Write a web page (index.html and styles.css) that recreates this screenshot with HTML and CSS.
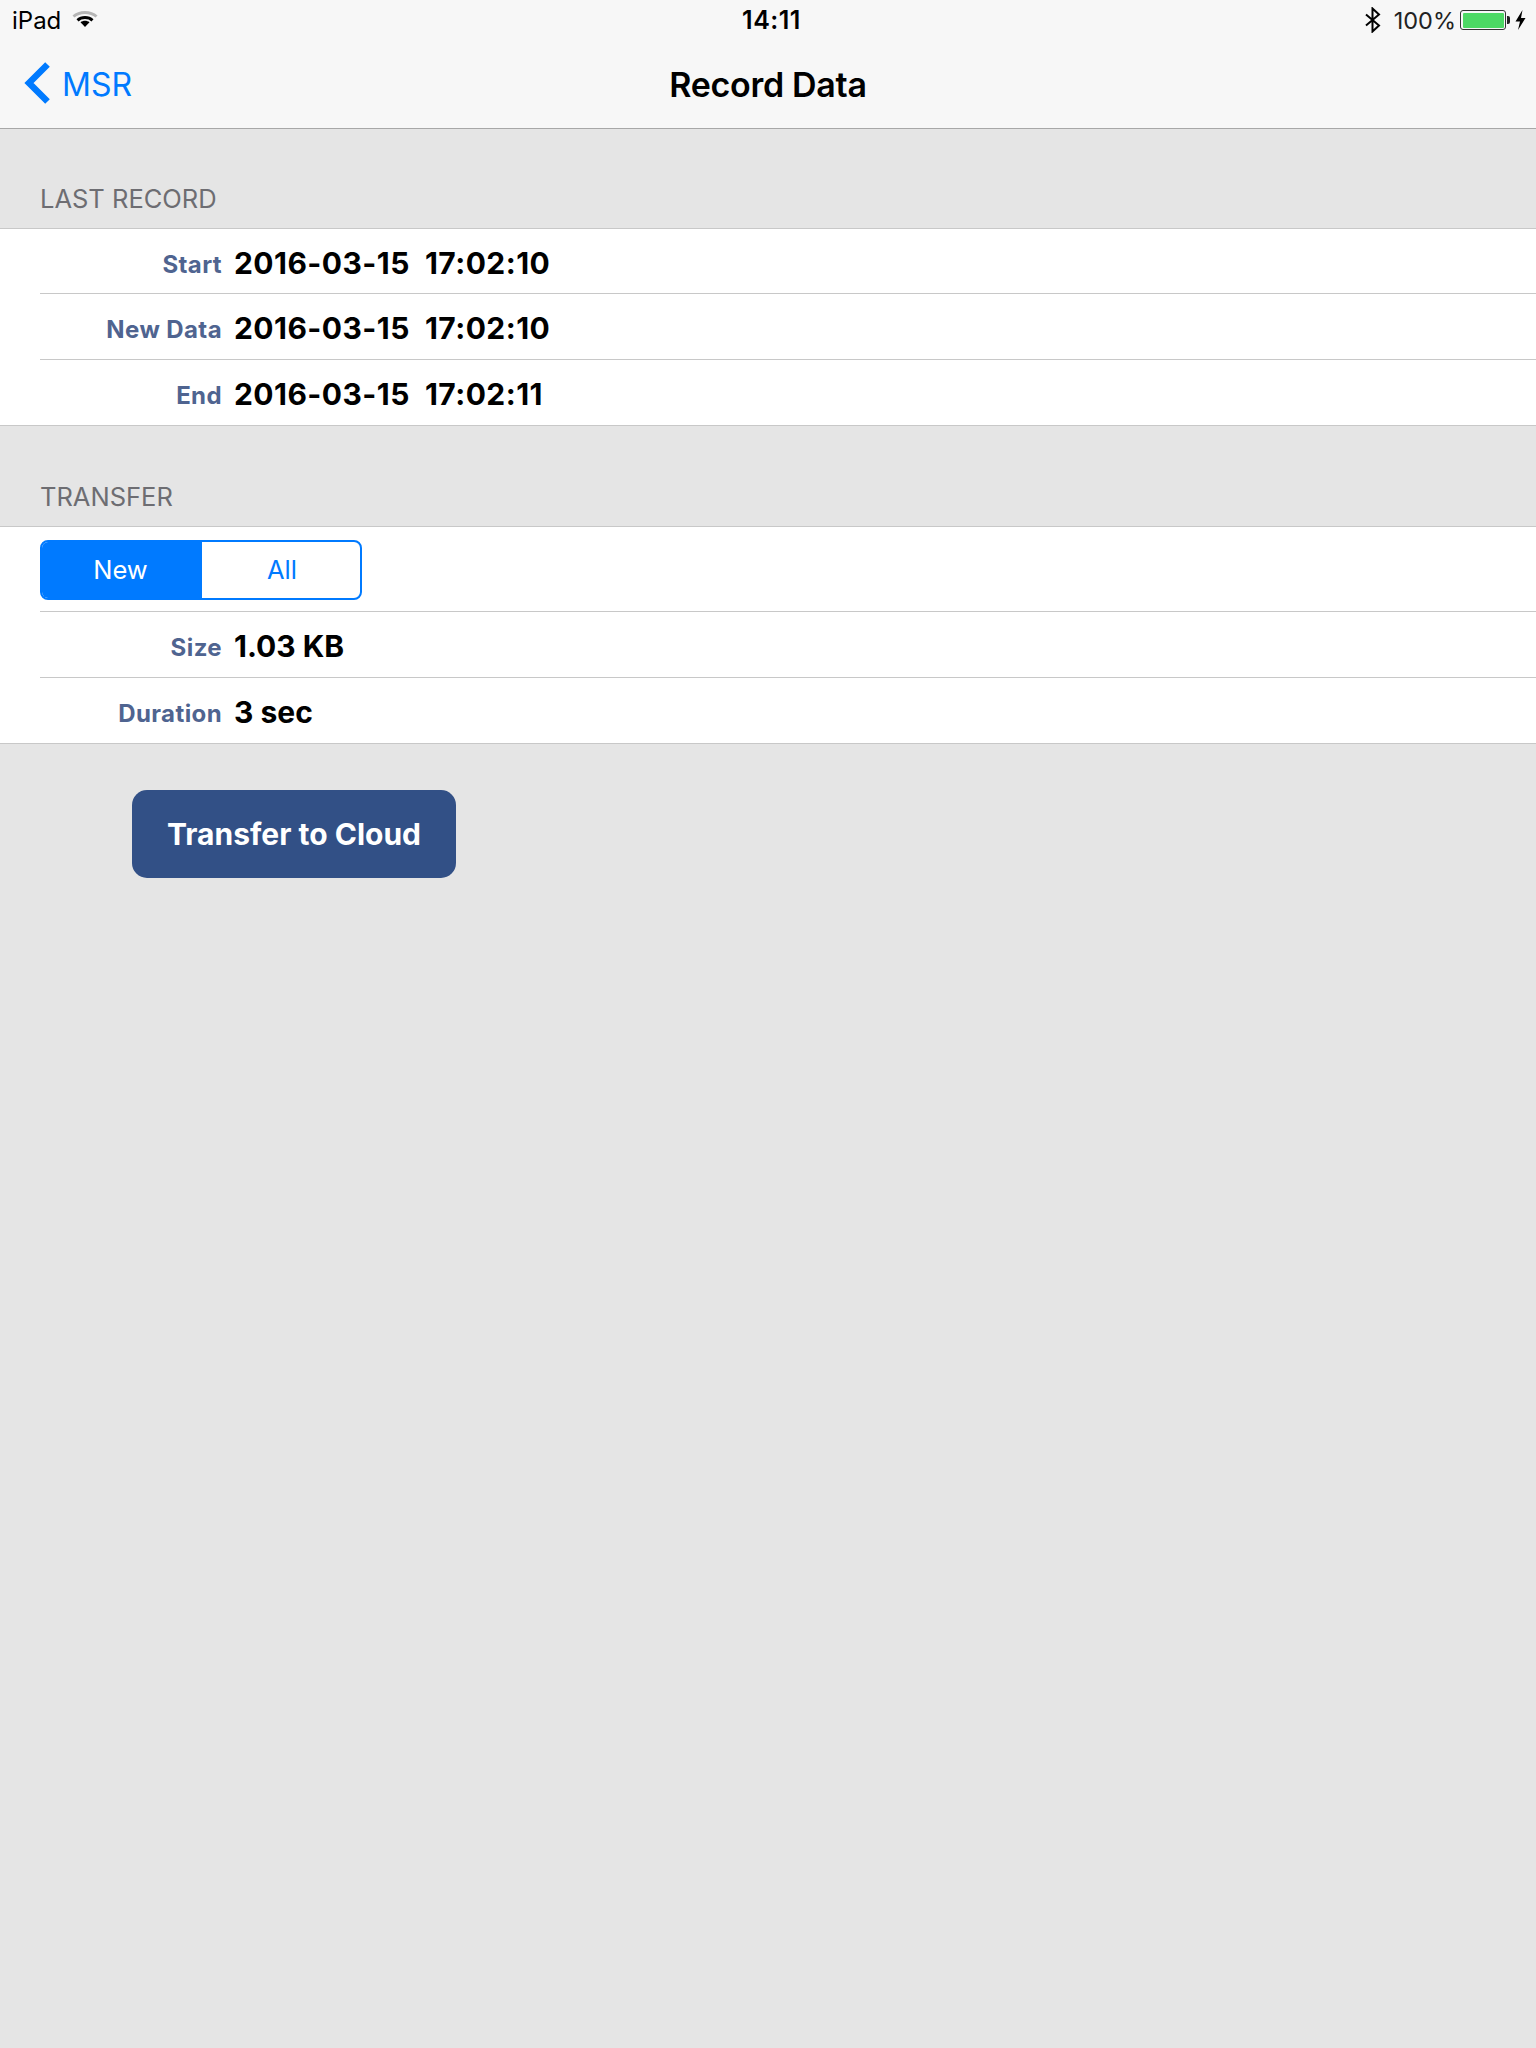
FILE: index.html
```html
<!DOCTYPE html>
<html lang="en">
<head>
<meta charset="utf-8">
<title>Record Data</title>
<link rel="stylesheet" href="styles.css">
</head>
<body>
<header class="topbar">
  <div class="status">
    <div class="status-left">
      <span>iPad</span>
      <svg class="wifi" width="26" height="18" viewBox="0 0 26 18">
        <path d="M1.5 6.500C7.500 1 18.500 1 24.500 6.500" fill="none" stroke="#b5b5b5" stroke-width="3"/>
        <path d="M5.500 10.300C9.500 6.700 16.500 6.700 20.500 10.300" fill="none" stroke="#000" stroke-width="3"/>
        <path d="M8.500 12.300C11 10.300 15 10.300 17.500 12.300L13 17Z" fill="#000"/>
      </svg>
    </div>
    <div class="status-time">14:11</div>
    <div class="status-right">
      <svg class="bt" width="18" height="26" viewBox="0 0 18 26">
        <path d="M2 7.500L15 18.500L8.500 24.500V1.500L15 7.500L2 18.500" fill="none" stroke="#000" stroke-width="2"/>
      </svg>
      <span class="pct">100%</span>
      <div class="battery"><div class="battery-fill"></div></div>
      <div class="battery-cap"></div>
      <svg class="bolt" width="11" height="20" viewBox="0 0 11 20">
        <path d="M7.500 0L0.500 11.500H5L3 20L10.500 8H6Z" fill="#000"/>
      </svg>
    </div>
  </div>
  <nav class="navbar">
    <a class="back">
      <svg class="chevron" width="26" height="42" viewBox="0 0 26 42">
        <path d="M23.500 2.500L5 21L23.500 39.500" fill="none" stroke="#007aff" stroke-width="6.500"/>
      </svg>
      <span class="back-text">MSR</span>
    </a>
    <h1 class="title">Record Data</h1>
  </nav>
</header>
<main>
  <section class="group group-first">
    <h2 class="group-head">LAST RECORD</h2>
    <div class="rows">
      <div class="row"><span class="label">Start</span><span class="value date">2016-03-15&nbsp; 17:02:10</span></div>
      <div class="row"><span class="label">New Data</span><span class="value date">2016-03-15&nbsp; 17:02:10</span></div>
      <div class="row"><span class="label">End</span><span class="value date">2016-03-15&nbsp; 17:02:11</span></div>
    </div>
  </section>
  <section class="group group-second">
    <h2 class="group-head">TRANSFER</h2>
    <div class="rows">
      <div class="row row-seg">
        <div class="segmented">
          <span class="seg seg-on">New</span>
          <span class="seg seg-off">All</span>
        </div>
      </div>
      <div class="row"><span class="label">Size</span><span class="value">1.03 KB</span></div>
      <div class="row"><span class="label">Duration</span><span class="value">3 sec</span></div>
    </div>
  </section>
  <button class="cta">Transfer to Cloud</button>
</main>
</body>
</html>
```
FILE: styles.css
```css
* { box-sizing: border-box; }
html, body { margin: 0; padding: 0; }
body {
  width: 1536px;
  height: 2048px;
  background: #e5e5e5;
  font-family: Inter, "Liberation Sans", sans-serif;
  color: #000;
  overflow: hidden;
}
.topbar {
  height: 129px;
  background: #f7f7f7;
  border-bottom: 1px solid #a7a7a7;
}
.status {
  height: 40px;
  display: grid;
  grid-template-columns: 1fr auto 1fr;
  align-items: center;
  padding: 0 8px 0 12px;
  font-size: 24px;
}
.status-left { display: flex; align-items: center; gap: 11px; }
.wifi { margin-top: -2px; }
.status-time { font-weight: 600; font-size: 25px; letter-spacing: 0.5px; padding-left: 3px; }
.status-right { display: flex; align-items: center; justify-content: flex-end; }
.bt { margin-right: 1px; }
.pct { margin-left: 11px; color: #222; font-size: 23.500px; }
.battery {
  width: 46px;
  height: 20px;
  margin-left: 4px;
  border: 1px solid #333;
  border-radius: 3px;
  padding: 1.500px;
}
.battery-fill { height: 100%; background: #4cd964; border-radius: 1px; }
.battery-cap { width: 3px; height: 8px; margin-left: 1px; background: #222; border-radius: 0 2px 2px 0; }
.bolt { margin-left: 5px; margin-right: 2px; }
.navbar {
  position: relative;
  height: 88px;
  display: flex;
  align-items: center;
  justify-content: center;
}
.back {
  position: absolute;
  left: 24px;
  top: 22px;
  display: flex;
  align-items: center;
  gap: 12px;
  color: #007aff;
  font-size: 32px;
}
.back-text { padding-top: 2px; }
.title { margin: 0; font-size: 34px; font-weight: 600; letter-spacing: -0.3px; }
.group-head {
  margin: 0;
  padding-left: 40px;
  font-size: 25.500px;
  font-weight: 400;
  line-height: 32px;
  color: #6d6d72;
}
.group-first .group-head { height: 99px; padding-top: 54px; }
.group-second .group-head { height: 100px; padding-top: 55px; }
.rows {
  background: #fff;
  border-top: 1px solid #c8c8c8;
  border-bottom: 1px solid #c8c8c8;
  padding-left: 40px;
}
.row {
  height: 66px;
  display: flex;
  align-items: center;
  gap: 12px;
  border-bottom: 1px solid #c8c8c8;
}
.group-first .row:first-child { height: 65px; }
.row:last-child { height: 65px; border-bottom: 0; }
.group-second .row-seg { height: 85px; align-items: flex-start; padding-top: 13px; }
.label {
  width: 182px;
  text-align: right;
  font-size: 24px;
  font-weight: 700;
  letter-spacing: 0.4px;
  color: #4f6490;
  padding-top: 6px;
}
.value { font-size: 30px; font-weight: 700; padding-top: 3px; }
.date { letter-spacing: 0.450px; }
.segmented {
  width: 322px;
  height: 60px;
  display: flex;
  border: 2px solid #007aff;
  border-radius: 8px;
  overflow: hidden;
  background: #fff;
}
.seg {
  flex: 1;
  display: flex;
  align-items: center;
  justify-content: center;
  font-size: 25.500px;
  color: #007aff;
  padding-bottom: 2px;
}
.seg-on { flex: 0 0 160px; padding-right: 3px; background: #007aff; color: #fff; }
.seg-off { padding-left: 2px; }
.cta {
  display: block;
  margin: 46px 0 0 132px;
  width: 324px;
  height: 88px;
  border: 0;
  border-radius: 15px;
  background: #325086;
  color: #fff;
  font-family: inherit;
  font-size: 30px;
  font-weight: 700;
}
```
